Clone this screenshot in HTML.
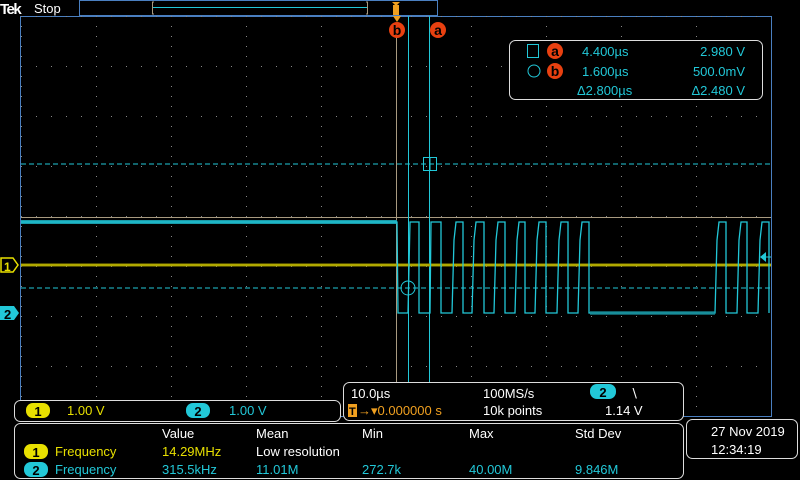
<!DOCTYPE html>
<html><head><meta charset="utf-8"><style>
html,body{margin:0;padding:0;background:#000;width:800px;height:480px;overflow:hidden}
svg{display:block}
text{font-family:"Liberation Sans Narrow","Liberation Sans",sans-serif}
</style></head><body>
<svg width="800" height="480" viewBox="0 0 800 480" xmlns="http://www.w3.org/2000/svg">
<defs>
<pattern id="gd" x="21" y="16" width="75" height="10" patternUnits="userSpaceOnUse"><rect x="0" y="0" width="1" height="1" fill="#888"/></pattern>
<pattern id="gh" x="21" y="16" width="15" height="50" patternUnits="userSpaceOnUse"><rect x="0" y="0" width="1" height="1" fill="#888"/></pattern>
</defs>
<!-- top bar -->
<text x="0" y="14" font-family="Liberation Serif" font-weight="bold" font-size="15" fill="#fff" letter-spacing="-1.5">Tek</text>
<text x="34" y="13" font-size="13" fill="#fff">Stop</text>
<rect x="79.5" y="0.5" width="358" height="15" fill="none" stroke="#4a7fc0"/>
<path d="M152.5 2v12M367.5 2v12M152 2h2M152 14h2M366 2h2M366 14h2" stroke="#a89a80"/>
<line x1="153" y1="7.5" x2="367" y2="7.5" stroke="#22c8d8"/>
<rect x="393" y="5" width="6" height="10" fill="#f0a020"/>
<path d="M392 2h8l-4 4z" fill="#f0a020"/>
<!-- graticule -->
<rect x="20.5" y="16.5" width="751" height="400" fill="none" stroke="#4a7fc0"/>
<rect x="21" y="16" width="750" height="400" fill="url(#gd)"/>
<rect x="21" y="16" width="750" height="400" fill="url(#gh)"/>
<path d="M393 16h8l-4 6z" fill="#f0a020"/>
<!-- cursor lines -->
<line x1="396.5" y1="36" x2="396.5" y2="416" stroke="#a89a80"/>
<line x1="21" y1="217.5" x2="771" y2="217.5" stroke="#a89a80"/>
<line x1="408.5" y1="16" x2="408.5" y2="416" stroke="#22c8d8"/>
<line x1="429.5" y1="16" x2="429.5" y2="416" stroke="#22c8d8"/>
<line x1="21" y1="164" x2="771" y2="164" stroke="#22c8d8" stroke-dasharray="5,3"/>
<line x1="21" y1="288" x2="771" y2="288" stroke="#22c8d8" stroke-dasharray="5,3"/>
<rect x="423.5" y="157.5" width="13" height="13" fill="none" stroke="#22c8d8"/>
<line x1="430" y1="157" x2="430" y2="171" stroke="#22c8d8"/>
<circle cx="408" cy="288" r="7" fill="none" stroke="#22c8d8"/>
<circle cx="397" cy="30" r="8" fill="#e84010"/><text x="397" y="35" font-size="14" font-weight="bold" fill="#000" text-anchor="middle">b</text>
<circle cx="438" cy="30" r="8" fill="#e84010"/><text x="438" y="35" font-size="14" font-weight="bold" fill="#000" text-anchor="middle">a</text>
<!-- ch1 -->
<rect x="21" y="263.5" width="750" height="3" fill="#9a9200"/>
<line x1="21" y1="265" x2="771" y2="265" stroke="#c8c000" stroke-width="1"/>
<!-- ch2 signal -->
<rect x="21" y="220" width="376" height="4" fill="#1a9aa8"/>
<polyline fill="none" stroke="#22c8d8" stroke-width="1.3" points="21,222 397,222 398,313 408,313 410,222 419,222 419,313 430,313 431,222 441,222 441,313 452,313 454,240 456,222 463,222 463,313 472,313 474,240 476,222 484,222 484,313 494,313 496,240 498,222 505,222 505,313 515,313 517,240 519,222 525,222 525,313 535,313 537,240 539,222 546,222 546,313 557,313 559,240 561,222 568,222 568,313 578,313 580,240 582,222 589,222 589,313 715,313 717,240 719,222 726,222 726,313 737,313 739,240 741,222 747,222 747,313 758,313 760,240 762,222 769,222 769,313"/>
<path d="M590 311h125v4h-125z" fill="#1a9aa8" opacity=".6"/>
<path d="M760 257l6-5v10z" fill="#22c8d8"/><line x1="763" y1="257" x2="771" y2="257" stroke="#22c8d8"/>
<!-- channel markers -->
<path d="M1 258h12l5 7-5 7h-12z" fill="#000" stroke="#e8e000" stroke-width="1.5"/>
<text x="4" y="271" font-size="12" font-weight="bold" fill="#e8e000">1</text>
<path d="M0 306h14l5 7-5 7h-14z" fill="#22c8d8"/>
<text x="4" y="319" font-size="13" font-weight="bold" fill="#000">2</text>
<!-- cursor readout -->
<rect x="509.5" y="40.5" width="253" height="59" rx="6" fill="#000" stroke="#ddd"/>
<rect x="527.5" y="44.5" width="11" height="13" fill="none" stroke="#22c8d8"/>
<circle cx="534" cy="71" r="6" fill="none" stroke="#22c8d8"/>
<circle cx="555" cy="51" r="8" fill="#e84010"/><text x="555" y="56" font-size="14" font-weight="bold" fill="#000" text-anchor="middle">a</text>
<circle cx="555" cy="71" r="8" fill="#e84010"/><text x="555" y="76" font-size="14" font-weight="bold" fill="#000" text-anchor="middle">b</text>
<g font-size="13" fill="#22c8d8">
<text x="582" y="56">4.400µs</text><text x="745" y="56" text-anchor="end">2.980 V</text>
<text x="582" y="76">1.600µs</text><text x="745" y="76" text-anchor="end">500.0mV</text>
<text x="577" y="95">Δ2.800µs</text><text x="745" y="95" text-anchor="end">Δ2.480 V</text>
</g>
<!-- bottom -->
<rect x="14.5" y="400.5" width="326" height="21" rx="6" fill="#000" stroke="#ddd"/>
<rect x="26" y="403" width="24" height="15" rx="7" fill="#e8e000"/><text x="38" y="416" font-size="13" font-weight="bold" fill="#000" text-anchor="middle">1</text>
<text x="67" y="415" font-size="13" fill="#e8e000">1.00 V</text>
<rect x="186" y="403" width="24" height="15" rx="7" fill="#22c8d8"/><text x="198" y="416" font-size="13" font-weight="bold" fill="#000" text-anchor="middle">2</text>
<text x="229" y="415" font-size="13" fill="#22c8d8">1.00 V</text>
<rect x="343.5" y="382.5" width="340" height="38" rx="6" fill="#000" stroke="#ddd"/>
<g font-size="13" fill="#fff">
<text x="351" y="398">10.0µs</text><text x="483" y="398">100MS/s</text>
<text x="483" y="415">10k points</text><text x="605" y="415">1.14 V</text>
<text x="630" y="398">∖</text>
</g>
<rect x="590" y="384" width="26" height="15" rx="7" fill="#22c8d8"/><text x="603" y="397" font-size="13" font-weight="bold" fill="#000" text-anchor="middle">2</text>
<rect x="348" y="404" width="9" height="13" fill="#f0a020"/><text x="349" y="415" font-size="11" font-weight="bold" fill="#000">T</text>
<text x="358" y="415" font-size="13" fill="#f0a020">→▾0.000000 s</text>
<rect x="14.5" y="423.5" width="669" height="55" rx="6" fill="#000" stroke="#ddd"/>
<g font-size="13" fill="#fff">
<text x="162" y="438">Value</text><text x="256" y="438">Mean</text><text x="362" y="438">Min</text><text x="469" y="438">Max</text><text x="575" y="438">Std Dev</text>
<text x="256" y="456">Low resolution</text>
</g>
<rect x="24" y="444" width="24" height="15" rx="7" fill="#e8e000"/><text x="36" y="457" font-size="13" font-weight="bold" fill="#000" text-anchor="middle">1</text>
<text x="55" y="456" font-size="13" fill="#e8e000">Frequency</text><text x="162" y="456" font-size="13" fill="#e8e000">14.29MHz</text>
<rect x="24" y="462" width="24" height="15" rx="7" fill="#22c8d8"/><text x="36" y="475" font-size="13" font-weight="bold" fill="#000" text-anchor="middle">2</text>
<g font-size="13" fill="#22c8d8">
<text x="55" y="474">Frequency</text><text x="162" y="474">315.5kHz</text><text x="256" y="474">11.01M</text><text x="362" y="474">272.7k</text><text x="469" y="474">40.00M</text><text x="575" y="474">9.846M</text>
</g>
<rect x="686.5" y="419.5" width="111" height="39" rx="6" fill="#000" stroke="#ddd"/>
<text x="711" y="436" font-size="13" fill="#fff">27 Nov 2019</text>
<text x="711" y="454" font-size="13" fill="#fff">12:34:19</text>
</svg>
</body></html>
